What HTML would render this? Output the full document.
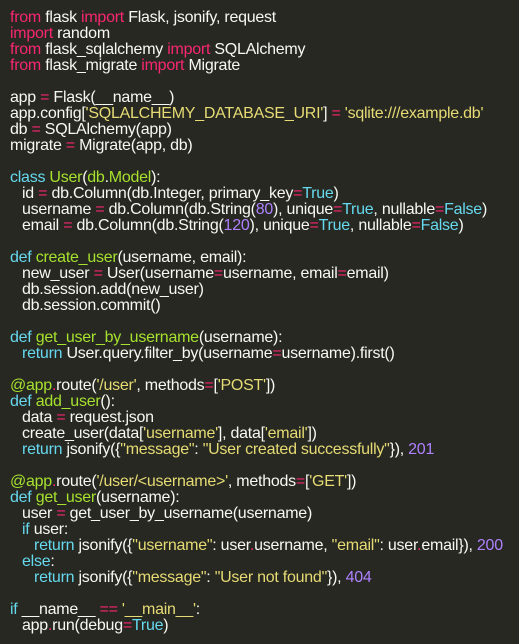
<!DOCTYPE html><html><head><style>
body{margin:0;background:#272822;width:519px;height:644px;overflow:hidden}
pre{margin:0;padding:10px 0 0 10px;font-family:"Liberation Sans",sans-serif;font-size:16px;line-height:16px;color:#f8f8f2;white-space:pre;letter-spacing:-0.25px}
.k{color:#f92672}.s{color:#e6db74}.b{color:#66d9ef}.g{color:#a6e22e}.n{color:#ae81ff}
.i{display:inline-block;width:12px}
</style></head><body><pre><span class="k">from</span> flask <span class="k">import</span> Flask, jsonify, request
<span class="k">import</span> random
<span class="k">from</span> flask_sqlalchemy <span class="k">import</span> SQLAlchemy
<span class="k">from</span> flask_migrate <span class="k">import</span> Migrate

app <span class="k">=</span> Flask(__name__)
app.config[<span class="s">'SQLALCHEMY_DATABASE_URI'</span>] <span class="k">=</span> <span class="s">'sqlite:///example.db'</span>
db <span class="k">=</span> SQLAlchemy(app)
migrate <span class="k">=</span> Migrate(app, db)

<span class="b">class</span> <span class="g">User</span>(<span class="g">db</span>.<span class="g">Model</span>):
<span class="i"></span>id <span class="k">=</span> db.Column(db.Integer, primary_key<span class="k">=</span><span class="b">True</span>)
<span class="i"></span>username <span class="k">=</span> db.Column(db.String(<span class="n">80</span>), unique<span class="k">=</span><span class="b">True</span>, nullable<span class="k">=</span><span class="b">False</span>)
<span class="i"></span>email <span class="k">=</span> db.Column(db.String(<span class="n">120</span>), unique<span class="k">=</span><span class="b">True</span>, nullable<span class="k">=</span><span class="b">False</span>)

<span class="b">def</span> <span class="g">create_user</span>(username, email):
<span class="i"></span>new_user <span class="k">=</span> User(username<span class="k">=</span>username, email<span class="k">=</span>email)
<span class="i"></span>db.session.add(new_user)
<span class="i"></span>db.session.commit()

<span class="b">def</span> <span class="g">get_user_by_username</span>(username):
<span class="i"></span><span class="b">return</span> User.query.filter_by(username<span class="k">=</span>username).first()

<span class="g">@app</span><span class="k">.</span>route(<span class="s">'/user'</span>, methods<span class="k">=</span>[<span class="s">'POST'</span>])
<span class="b">def</span> <span class="g">add_user</span>():
<span class="i"></span>data <span class="k">=</span> request.json
<span class="i"></span>create_user(data[<span class="s">'username'</span>], data[<span class="s">'email'</span>])
<span class="i"></span><span class="b">return</span> jsonify({<span class="s">"message"</span>: <span class="s">"User created successfully"</span>}), <span class="n">201</span>

<span class="g">@app</span><span class="k">.</span>route(<span class="s">'/user/&lt;username&gt;'</span>, methods<span class="k">=</span>[<span class="s">'GET'</span>])
<span class="b">def</span> <span class="g">get_user</span>(username):
<span class="i"></span>user <span class="k">=</span> get_user_by_username(username)
<span class="i"></span><span class="b">if</span> user:
<span class="i"></span><span class="i"></span><span class="b">return</span> jsonify({<span class="s">"username"</span>: user<span class="k">.</span>username, <span class="s">"email"</span>: user<span class="k">.</span>email}), <span class="n">200</span>
<span class="i"></span><span class="b">else</span>:
<span class="i"></span><span class="i"></span><span class="b">return</span> jsonify({<span class="s">"message"</span>: <span class="s">"User not found"</span>}), <span class="n">404</span>

<span class="b">if</span> __name__ <span class="k">==</span> <span class="s">'__main__'</span>:
<span class="i"></span>app<span class="k">.</span>run(debug<span class="k">=</span><span class="b">True</span>)</pre></body></html>
